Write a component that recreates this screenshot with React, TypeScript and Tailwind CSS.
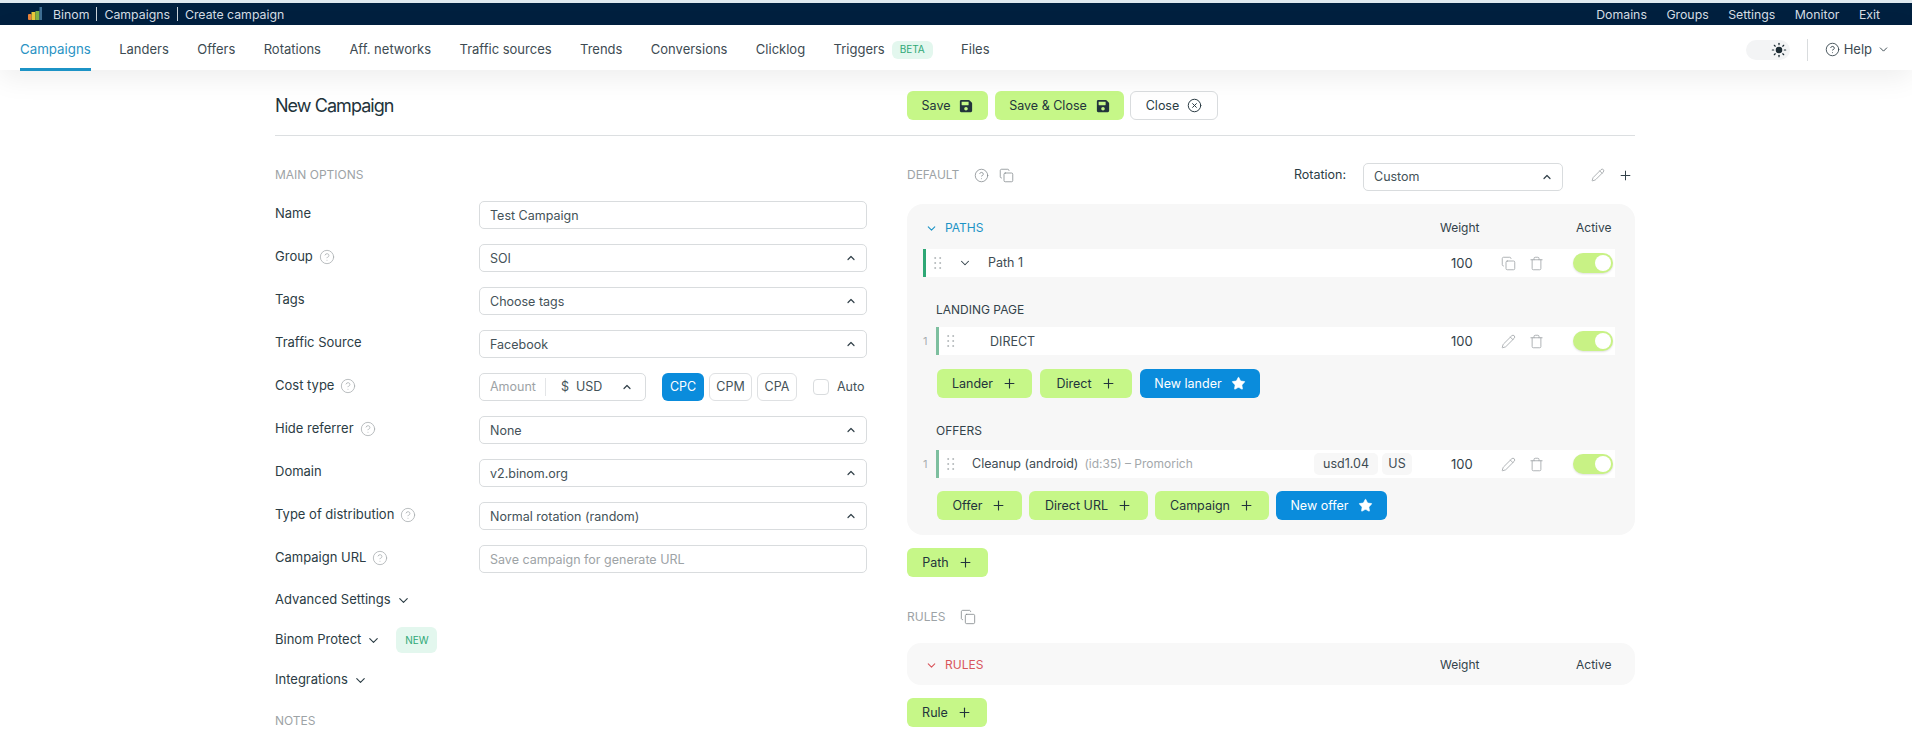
import React from "react";
import { ChevronDown, ChevronUp, CircleHelp, CircleX, Copy, Pencil, Plus, Star, Sun, Trash } from "lucide-react";
import { FaSave } from "react-icons/fa";

const Grip = () => (
  <svg width="8" height="12" viewBox="0 0 8 12" className="fill-[#b5b9bc] shrink-0">
    {[1, 6, 11].flatMap((y) => [1.2, 6.2].map((x) => <circle key={`${x}-${y}`} cx={x} cy={y} r="1" />))}
  </svg>
);

const Help = () => <CircleHelp size={16} strokeWidth={1.2} className="text-[#a8adb0] shrink-0" />;

const Logo = () => (
  <svg width="16" height="14" viewBox="0 0 16 14">
    <rect x="0" y="7" width="3.5" height="6" rx="1" fill="#e8833a" />
    <rect x="3.5" y="5" width="4" height="8" fill="#e8c93a" />
    <rect x="7.5" y="4" width="4" height="9" fill="#7fb347" />
    <rect x="11.5" y="0" width="2.5" height="13" fill="#3f6f94" />
  </svg>
);

const Toggle = () => (
  <div className="w-10 h-5 rounded-full bg-[#c8f285] flex items-center justify-end pr-[2px] shadow-[0_1px_2px_rgba(0,0,0,.12)] shrink-0">
    <div className="w-4 h-4 rounded-full bg-white" />
  </div>
);

const Btn = ({ label, w, blue, icon }: { label: string; w: string; blue?: boolean; icon?: React.ReactNode }) => (
  <button
    className={`h-[29px] rounded-[6px] flex items-center justify-center gap-[9px] text-[12.5px] shrink-0 ${w} ${
      blue ? "bg-[#0a8cdc] text-white" : "bg-[#c6f788] text-[#22343c]"
    }`}
  >
    <span className="pt-[2px]">{label}</span>
    {icon ?? <Plus size={15} strokeWidth={1.8} />}
  </button>
);

const Field = ({ value, muted, select = true }: { value: string; muted?: boolean; select?: boolean }) => (
  <div className="h-7 border border-[#d9dcde] rounded-[5px] bg-white flex items-center justify-between pl-[10px] pr-[9px] text-[12.5px]">
    <span className={`pt-[2px] ${muted ? "text-[#9da3a6]" : "text-[#445258]"}`}>{value}</span>
    {select && <ChevronUp size={12} strokeWidth={2.4} className="text-[#33424a]" />}
  </div>
);

const Label = ({ text, help }: { text: string; help?: boolean }) => (
  <div className="flex items-center gap-[6px] text-[13px] text-[#2b3c44] -mt-[3px]">
    {text}
    {help && <Help />}
  </div>
);

const Expand = ({ text, badge }: { text: string; badge?: boolean }) => (
  <div className="h-[40px] flex items-center text-[13px] text-[#2b3c44]">
    {text}
    <ChevronDown size={15} strokeWidth={1.8} className="ml-[5px]" />
    {badge && (
      <span className="ml-[15px] h-[26px] w-[41px] flex items-center justify-center rounded-[6px] bg-[#e3f7ee] text-[10px] text-[#2fa876]">
        NEW
      </span>
    )}
  </div>
);

const RowEnd = ({ first }: { first?: boolean }) => (
  <div className="flex items-center shrink-0">
    <span className="text-[13px] text-[#33424a] w-[50px] pt-[1px]">100</span>
    {first ? (
      <Copy size={15} strokeWidth={1.3} className="text-[#9ea3a6]" />
    ) : (
      <Pencil size={15} strokeWidth={1.3} className="text-[#9ea3a6]" />
    )}
    <Trash size={15} strokeWidth={1.3} className="text-[#9ea3a6] ml-[13px]" />
    <div className="w-[29px]" />
    <Toggle />
    <div className="w-[2px]" />
  </div>
);

const nav = ["Landers", "Offers", "Rotations", "Aff. networks", "Traffic sources", "Trends", "Conversions", "Clicklog"];

export default function App() {
  return (
    <div className="h-[744px] overflow-hidden bg-white font-['Inter',sans-serif] text-[#2b3c44]">
      <div className="h-[3px] bg-[#dfe9ef]" />
      <div className="h-[22px] bg-[#00203f] text-[#d5dde4] text-[12.3px] flex items-center justify-between pl-[28px] pr-[32px]">
        <div className="flex items-center">
          <Logo />
          <span className="ml-[9px] pt-[2px]">Binom</span>
          <span className="mx-[7px] h-[14px] w-px bg-[#c9d2d9]" />
          <span className="pt-[2px]">Campaigns</span>
          <span className="mx-[7px] h-[14px] w-px bg-[#c9d2d9]" />
          <span className="pt-[2px]">Create campaign</span>
        </div>
        <div className="flex items-center gap-[19.5px] pt-[2px]">
          <span>Domains</span>
          <span>Groups</span>
          <span>Settings</span>
          <span>Monitor</span>
          <span>Exit</span>
        </div>
      </div>

      <div className="relative h-[45px] bg-white flex items-center pl-[20px] pr-[22px] text-[13px] text-[#3d4b52] shadow-[0_8px_28px_rgba(0,0,0,.07)]">
        <div className="h-full flex items-center gap-[28.4px] pt-[4px]">
          <span className="relative h-full flex items-center text-[#2a93c4] text-[13.3px]">
            Campaigns
            <span className="absolute left-0 right-0 -bottom-[1px] h-[3px] bg-[#1c93c6]" />
          </span>
          {nav.map((n) => (
            <span key={n}>{n}</span>
          ))}
          <span className="flex items-center gap-[7px]">
            Triggers
            <span className="h-[18px] w-[41px] flex items-center justify-center rounded-[6px] bg-[#e3f7ee] text-[10px] text-[#2fa876]">
              BETA
            </span>
          </span>
          <span>Files</span>
        </div>
        <div className="ml-auto flex items-center pt-[4px]">
          <div className="w-[44px] h-[20px] rounded-full bg-[#f3f4f5] flex items-center justify-end pr-[3px]">
            <Sun size={16} strokeWidth={1.8} className="text-[#1d2c34] fill-[#1d2c34]" />
          </div>
          <div className="w-px h-[22px] bg-[#d9dcde] mx-[17px]" />
          <CircleHelp size={15} strokeWidth={1.4} className="text-[#33424a] mr-[4px]" />
          <span>Help</span>
          <ChevronDown size={13} strokeWidth={1.8} className="ml-[5px]" />
        </div>
      </div>

      <div className="w-[1360px] ml-[275px]">
        <div className="h-[66px] pt-[21px] border-b border-[#dcdfe1] flex items-start">
          <div className="w-[632px] text-[18px] tracking-[-0.95px] text-[#22333b] leading-[29px]">New Campaign</div>
          <div className="flex gap-[7px]">
            <Btn label="Save" w="w-[81px]" icon={<FaSave size={14} />} />
            <Btn label="Save & Close" w="w-[129px]" icon={<FaSave size={14} />} />
            <button className="h-[29px] w-[88px] -ml-[1px] rounded-[6px] border border-[#d9dcde] bg-white flex items-center justify-center gap-[8px] text-[12.5px]">
              <span className="pt-[2px]">Close</span>
              <CircleX size={15} strokeWidth={1.6} />
            </button>
          </div>
        </div>

        <div className="flex">
          <div className="w-[592px] mr-[40px]">
            <div className="h-[65px] pt-[31px] text-[12px] text-[#9da3a6] leading-[16px]">MAIN OPTIONS</div>
            <div className="grid grid-cols-[204px_388px] gap-y-[15px] items-center">
              <Label text="Name" />
              <Field value="Test Campaign" select={false} />
              <Label text="Group" help />
              <Field value="SOI" />
              <Label text="Tags" />
              <Field value="Choose tags" />
              <Label text="Traffic Source" />
              <Field value="Facebook" />
              <Label text="Cost type" help />
              <div className="flex items-center">
                <div className="w-[167px] h-7 border border-[#d9dcde] rounded-[5px] flex items-center pl-[10px] pr-[12px] text-[12.5px] text-[#445258]">
                  <span className="text-[#9da3a6] w-[56px] border-r border-[#e3e5e7] mr-[15px]">Amount</span>
                  <span>$</span>
                  <span className="ml-[7px]">USD</span>
                  <ChevronUp size={12} strokeWidth={2.4} className="ml-auto text-[#33424a]" />
                </div>
                <span className="ml-[16px] w-[42px] h-7 rounded-[6px] bg-[#0a8cdc] text-white text-[12.5px] flex items-center justify-center">CPC</span>
                <span className="ml-[5px] w-[43px] h-7 rounded-[6px] border border-[#dfe1e3] text-[#445258] text-[12.5px] flex items-center justify-center">CPM</span>
                <span className="ml-[5px] w-[40px] h-7 rounded-[6px] border border-[#dfe1e3] text-[#445258] text-[12.5px] flex items-center justify-center">CPA</span>
                <span className="ml-[16px] w-4 h-4 rounded-[4px] border border-[#d9dcde]" />
                <span className="ml-[8px] text-[12.5px] text-[#445258]">Auto</span>
              </div>
              <Label text="Hide referrer" help />
              <Field value="None" />
              <Label text="Domain" />
              <Field value="v2.binom.org" />
              <Label text="Type of distribution" help />
              <Field value="Normal rotation (random)" />
              <Label text="Campaign URL" help />
              <Field value="Save campaign for generate URL" muted select={false} />
            </div>
            <div className="mt-[7px]">
              <Expand text="Advanced Settings" />
              <Expand text="Binom Protect" badge />
              <Expand text="Integrations" />
            </div>
            <div className="mt-[12px] text-[12px] text-[#9da3a6]">NOTES</div>
          </div>

          <div className="w-[728px]">
            <div className="h-[53px] pt-[25px] flex items-center text-[12px] text-[#9da3a6]">
              <span>DEFAULT</span>
              <CircleHelp size={15} strokeWidth={1.2} className="ml-[15px] text-[#7f8589]" />
              <Copy size={15} strokeWidth={1.2} className="ml-[10px] text-[#7f8589]" />
              <span className="ml-auto text-[12.5px] text-[#2b3c44]">Rotation:</span>
              <div className="ml-[17px] w-[200px] pt-[3px]">
                <Field value="Custom" />
              </div>
              <Pencil size={14} strokeWidth={1.2} className="ml-[28px] text-[#8c9296]" />
              <Plus size={15} strokeWidth={1.6} className="ml-[13px] mr-[2px] text-[#33424a]" />
            </div>

            <div className="mt-[15px] h-[331px] rounded-[16px] bg-[#f7f7f7] pt-[14px] pl-[16px] pr-[20px]">
              <div className="h-[18px] pt-[2px] flex items-center text-[12px]">
                <ChevronDown size={13} strokeWidth={2} className="text-[#1c93c6] ml-[2px]" />
                <span className="ml-[7px] text-[#1c93c6]">PATHS</span>
                <span className="ml-auto text-[#33424a] w-[136px]">Weight</span>
                <span className="text-[#33424a] w-[39px]">Active</span>
              </div>
              <div className="mt-[13px] h-7 bg-white border-l-[3px] border-[#2fa876] flex items-center pl-[8px]">
                <Grip />
                <ChevronDown size={14} strokeWidth={1.8} className="ml-[16px] text-[#33424a]" />
                <span className="ml-[16px] pt-[1px] text-[12.5px] text-[#3d4b52]">Path 1</span>
                <div className="ml-auto"><RowEnd first /></div>
              </div>

              <div className="mt-[25px] ml-[13px] text-[12px] text-[#33424a] leading-[16px]">LANDING PAGE</div>
              <div className="mt-[9px] flex items-center">
                <span className="w-[13px] text-[11px] text-[#a8adb0]">1</span>
                <div className="flex-1 h-7 bg-white border-l-[3px] border-[#7dbf9f] flex items-center pl-[8px]">
                  <Grip />
                  <span className="ml-[35px] pt-[2px] text-[12.5px] text-[#3d4b52]">DIRECT</span>
                  <div className="ml-auto"><RowEnd /></div>
                </div>
              </div>
              <div className="mt-[14px] ml-[14px] flex gap-[8px]">
                <Btn label="Lander" w="w-[95px]" />
                <Btn label="Direct" w="w-[92px]" />
                <Btn label="New lander" w="w-[120px]" blue icon={<Star size={15} fill="white" strokeWidth={1} />} />
              </div>

              <div className="mt-[25px] ml-[13px] text-[12px] text-[#33424a] leading-[16px]">OFFERS</div>
              <div className="mt-[11px] flex items-center">
                <span className="w-[13px] text-[11px] text-[#a8adb0]">1</span>
                <div className="flex-1 h-7 bg-white border-l-[3px] border-[#7dbf9f] flex items-center pl-[8px]">
                  <Grip />
                  <span className="ml-[17px] text-[12.5px] text-[#3d4b52]">Cleanup (android)</span>
                  <span className="ml-[6px] text-[12px] text-[#a3a8ab]">(id:35) – Promorich</span>
                  <div className="ml-auto flex items-center">
                    <span className="w-[64px] h-[22px] rounded-[5px] bg-[#f7f7f7] flex items-center justify-center text-[12.5px] text-[#3d4b52]">usd1.04</span>
                    <span className="ml-[4px] mr-[39px] w-[30px] h-[22px] rounded-[5px] bg-[#f7f7f7] flex items-center justify-center text-[12.5px] text-[#3d4b52]">US</span>
                    <RowEnd />
                  </div>
                </div>
              </div>
              <div className="mt-[13px] ml-[14px] flex gap-[7px]">
                <Btn label="Offer" w="w-[85px]" />
                <Btn label="Direct URL" w="w-[119px]" />
                <Btn label="Campaign" w="w-[114px]" />
                <Btn label="New offer" w="w-[111px]" blue icon={<Star size={15} fill="white" strokeWidth={1} />} />
              </div>
            </div>

            <div className="mt-[13px]">
              <Btn label="Path" w="w-[81px]" />
            </div>

            <div className="mt-[31px] h-[18px] flex items-center text-[12px] text-[#9da3a6]">
              RULES
              <Copy size={16} strokeWidth={1.2} className="ml-[15px] text-[#7f8589]" />
            </div>

            <div className="mt-[17px] h-[42px] rounded-[14px] bg-[#f8f8f8] flex items-center pl-[18px] pr-[20px] pt-[2px] text-[12px]">
              <ChevronDown size={13} strokeWidth={2} className="text-[#d8555b]" />
              <span className="ml-[7px] text-[#d8555b]">RULES</span>
              <span className="ml-auto text-[#33424a] w-[136px]">Weight</span>
              <span className="text-[#33424a] w-[39px]">Active</span>
            </div>

            <div className="mt-[13px]">
              <Btn label="Rule" w="w-[80px]" />
            </div>
          </div>
        </div>
      </div>
    </div>
  );
}
